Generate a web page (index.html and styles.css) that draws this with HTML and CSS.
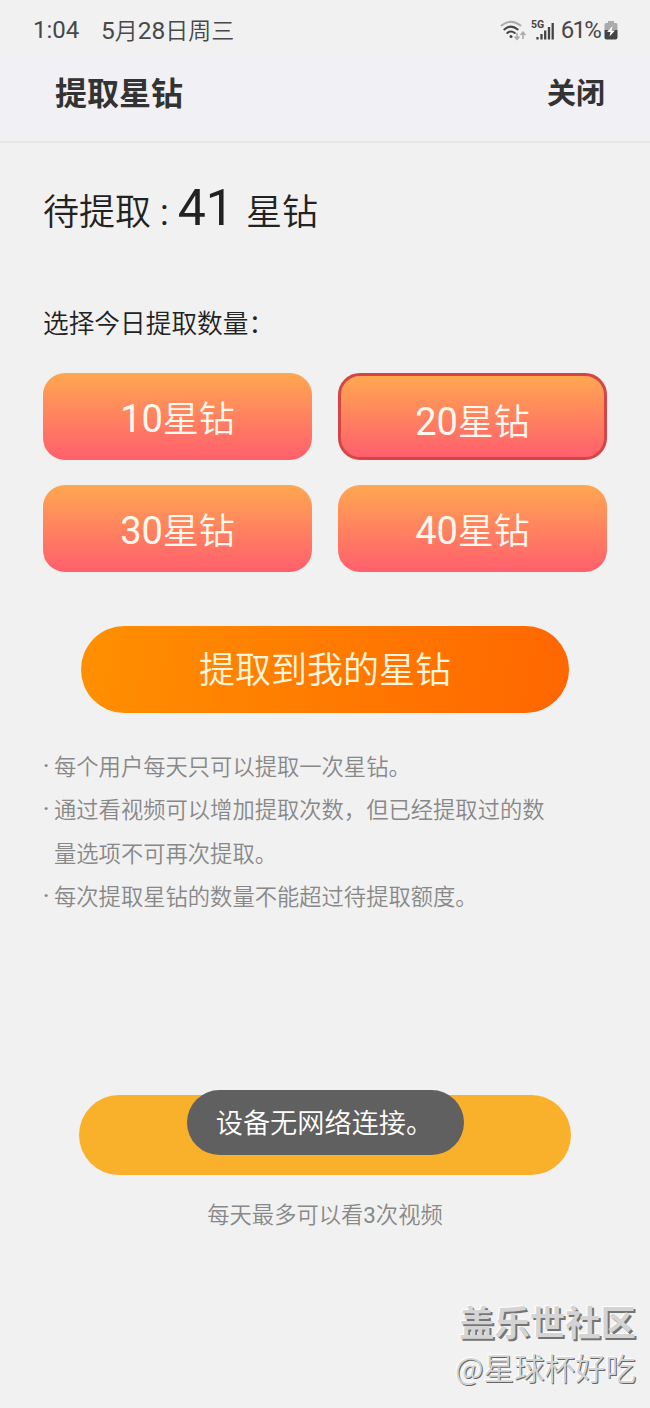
FILE: index.html
```
<!DOCTYPE html>
<html lang="zh-CN">
<head>
    <meta charset="UTF-8">
    <meta name="viewport" content="width=device-width, initial-scale=1.0">
    <title>提取星钻</title>
    <link rel="stylesheet" href="styles.css">
</head>
<body>
<div class="status-bar">
    <span class="time">1:04</span>
    <span class="date"><span class="num">5</span>月<span class="num">28</span>日周三</span>
    <div class="status-icons">
        <svg class="wifi" width="26" height="21" viewBox="0 0 26 21" fill="none" stroke-linecap="round">
            <path d="M1.500 5.500Q11 -2 20.500 5.500" stroke="#aaa" stroke-width="2"/>
            <path d="M4.300 9.400Q11 3.800 17.700 9.400" stroke="#444" stroke-width="2"/>
            <path d="M7.300 13Q11 10 14.700 13" stroke="#444" stroke-width="2"/>
            <circle cx="11" cy="16.500" r="1.500" fill="#444"/>
            <path d="M17 13.500V19M15 17L17 19.300L19 17M23 18.500V12.700M21 14.500L23 12.300L25 14.500" stroke="#aaa" stroke-width="1.600"/>
        </svg>
        <svg class="signal" width="24" height="22" viewBox="0 0 24 22">
            <text class="signal-label" x="0" y="9">5G</text>
            <path d="M6.500 18V20.500M10.500 15V20.500M14.200 11.500V20.500M18 8V20.500M21.700 4V20.500" stroke="#444" stroke-width="2.300"/>
        </svg>
        <span class="percent">61%</span>
        <svg class="battery" width="14" height="19" viewBox="0 0 14 19">
            <path d="M4 0H10V2H12Q13.500 2 13.500 4V9H.5V4Q.5 2 2 2H4Z" fill="#aaa"/>
            <path d="M.5 9H13.500V16.500Q13.500 18.500 11.500 18.500H2.500Q.5 18.500 .5 16.500Z" fill="#444"/>
            <path d="M8.500 5L3 11H6.500L5.500 15.500L11 9.500H7.500Z" fill="#fff"/>
        </svg>
    </div>
</div>

<header class="header">
    <h1>提取星钻</h1>
    <span class="close">关闭</span>
</header>

<main class="content">
    <div class="balance">待提取<span class="colon">:</span><span class="amount">41</span>星钻</div>

    <div class="label">选择今日提取数量：</div>

    <div class="options">
        <div class="option"><span class="num">10</span>星钻</div>
        <div class="option active"><span class="num">20</span>星钻</div>
        <div class="option"><span class="num">30</span>星钻</div>
        <div class="option"><span class="num">40</span>星钻</div>
    </div>

    <div class="extract-btn">提取到我的星钻</div>

    <ul class="rules">
        <li>每个用户每天只可以提取一次星钻。</li>
        <li>通过看视频可以增加提取次数，但已经提取过的数量选项不可再次提取。</li>
        <li>每次提取星钻的数量不能超过待提取额度。</li>
    </ul>

    <div class="video-btn">
        <div class="toast">设备无网络连接。</div>
    </div>
    <div class="hint">每天最多可以看<span class="num">3</span>次视频</div>
</main>

<div class="watermark">
    <div class="community">盖乐世社区</div>
    <div class="author">@星球杯好吃</div>
</div>
</body>
</html>
```

FILE: styles.css
```
* {
    box-sizing: border-box;
    margin: 0;
    padding: 0;
}

body {
    width: 650px;
    height: 1408px;
    position: relative;
    overflow: hidden;
    background-color: #f1f1f1;
    color: #222;
    font-family: 'Noto Sans CJK SC', sans-serif;
    font-weight: 350;
    white-space: nowrap;
}

.num, .time, .percent, .amount, .colon {
    font-family: Roboto, sans-serif;
    font-weight: 400;
}

.status-bar {
    display: flex;
    align-items: center;
    height: 54px;
    padding: 6px 32px 0 33px;
    color: #484848;
    font-size: 24px;
    line-height: 34px;
}

.time {
    width: 68px;
}

.date {
    font-size: 23px;
}

.date .num {
    font-size: 24.500px;
}

.status-icons {
    display: flex;
    align-items: center;
    margin-left: auto;
}

.signal {
    margin: 0 6px 0 5px;
}

.signal-label {
    font: 700 10.500px Roboto, sans-serif;
    fill: #444;
}

.percent {
    font-size: 24px;
    letter-spacing: -1.800px;
}

.battery {
    margin-left: 4px;
}

.header {
    display: flex;
    justify-content: space-between;
    align-items: center;
    height: 89px;
    padding: 0 45px 14px 55px;
    background: linear-gradient(#f1f1f5 82px, #f1f1f1 84px);
    border-bottom: 2px solid #e6e6e6;
    color: #333;
}

h1 {
    font-size: 32px;
    line-height: 40px;
    font-weight: 700;
}

.close {
    font-size: 29px;
    line-height: 40px;
    font-weight: 700;
}

.content {
    padding: 35px 43px 0;
}

.balance {
    height: 60px;
    font-size: 36px;
    line-height: 60px;
}

.colon {
    margin: 0 9px;
}

.amount {
    margin-right: 12px;
    font-size: 50px;
}

.label {
    margin-top: 66px;
    font-size: 25.700px;
    line-height: 36px;
}

.options {
    display: grid;
    grid-template-columns: 269px 269px;
    grid-auto-rows: 87px;
    gap: 25px 26px;
    margin-top: 33px;
}

.option {
    border-radius: 22px;
    background: linear-gradient(#ffa751, #ff5f6d);
    color: #fff8ee;
    font-size: 36px;
    line-height: 86px;
    text-align: center;
}

.option .num {
    font-size: 38px;
}

.option.active {
    border: 3px solid #d64545;
}

.extract-btn {
    width: 488px;
    height: 87px;
    margin: 54px auto 0;
    border-radius: 44px;
    background: linear-gradient(100deg, #ff9000, #ff6600);
    color: #fff5df;
    font-size: 36px;
    line-height: 83px;
    text-align: center;
}

.rules {
    width: 510px;
    margin-top: 31px;
    list-style: none;
    color: #888;
    font-size: 22.300px;
    line-height: 43.400px;
    white-space: normal;
}

.rules li {
    display: flex;
}

.rules li::before {
    content: '·';
    flex: none;
    width: 11px;
    font-family: Roboto, sans-serif;
    font-weight: 500;
}

.video-btn {
    position: relative;
    width: 492px;
    height: 80px;
    margin: 177px auto 0;
    border-radius: 40px;
    background-color: #f9b02b;
}

.toast {
    position: absolute;
    top: -5px;
    left: 108px;
    width: 277px;
    height: 65px;
    padding-right: 2px;
    border-radius: 33px;
    background-color: #606060;
    color: #fff;
    font-size: 27.200px;
    line-height: 63px;
    text-align: center;
}

.hint {
    margin-top: 21px;
    color: #888;
    font-size: 22.300px;
    line-height: 34px;
    text-align: center;
}

.watermark {
    position: absolute;
    right: 14px;
    bottom: 18px;
    color: #d4d4d4;
    text-align: right;
}

.community {
    font-size: 35.400px;
    line-height: 46px;
    font-weight: 700;
    text-shadow: 2px 2px 0 #747474, -1px -1px 1px #fff;
}

.author {
    font-size: 30.500px;
    line-height: 46px;
    text-shadow: 1px 1px 0 #666, -1px -1px 1px #fff;
}
```
